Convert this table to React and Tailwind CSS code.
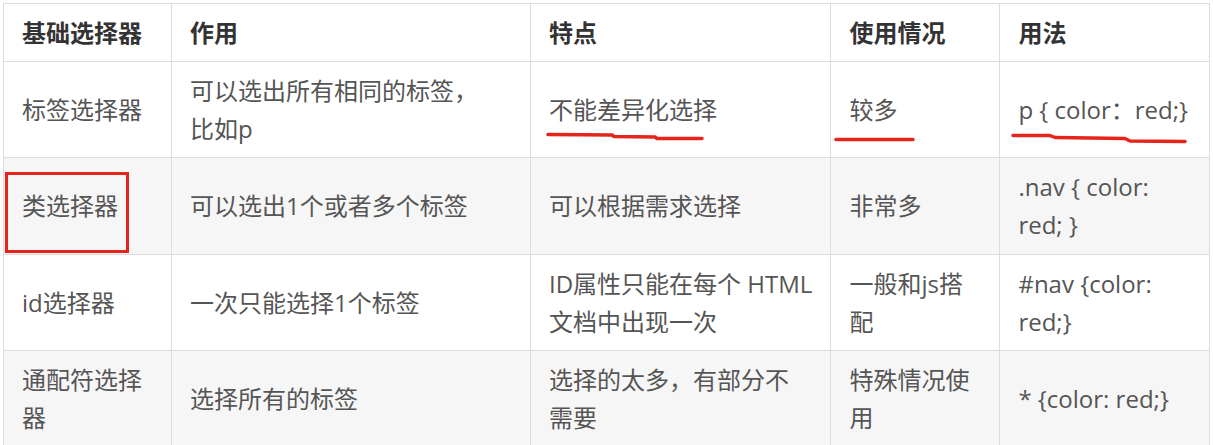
import React from "react";

const rows = [
  {
    cls: "h-[96px] bg-white",
    cells: [
      "标签选择器",
      ["可以选出所有相同的标签，", "比如p"],
      "不能差异化选择",
      "较多",
      "p { color：red;}",
    ],
  },
  {
    cls: "h-[97px] bg-[#f6f6f6]",
    cells: [
      "类选择器",
      "可以选出1个或者多个标签",
      "可以根据需求选择",
      "非常多",
      [".nav { color:", "red; }"],
    ],
  },
  {
    cls: "h-[96px] bg-white",
    cells: [
      "id选择器",
      "一次只能选择1个标签",
      ["ID属性只能在每个 HTML", "文档中出现一次"],
      ["一般和js搭", "配"],
      ["#nav {color:", "red;}"],
    ],
  },
  {
    cls: "h-[96px] bg-[#f6f6f6]",
    cells: [
      ["通配符选择", "器"],
      "选择所有的标签",
      ["选择的太多，有部分不", "需要"],
      ["特殊情况使", "用"],
      "* {color: red;}",
    ],
  },
];

const heads = ["基础选择器", "作用", "特点", "使用情况", "用法"];
const widths = ["w-[168px]", "w-[359px]", "w-[300px]", "w-[169px]", "w-[210px]"];

const Cell = ({ value }) => (
  <td className="border border-[#dcdcdc] px-[18px] align-middle whitespace-nowrap">
    {Array.isArray(value)
      ? value.map((line, i) => <div key={i}>{line}</div>)
      : value}
  </td>
);

export default function App() {
  return (
    <div className="relative w-[1213px] h-[445px] overflow-hidden bg-white pt-[3px] pl-[3px] font-['Open_Sans','Noto_Sans_CJK_SC',sans-serif]">
      <table className="table-fixed border-collapse text-[24px] leading-[38px] text-[#555]">
        <colgroup>
          {widths.map((w, i) => (
            <col key={i} className={w} />
          ))}
        </colgroup>
        <thead>
          <tr className="h-[58px] bg-white">
            {heads.map((h) => (
              <th key={h} className="border border-[#dcdcdc] px-[18px] text-left font-bold text-[#333] align-middle">
                {h}
              </th>
            ))}
          </tr>
        </thead>
        <tbody>
          {rows.map((row, idx) => (
            <tr key={idx} className={row.cls}>
              {row.cells.map((c, i) => (
                <Cell key={i} value={c} />
              ))}
            </tr>
          ))}
        </tbody>
      </table>

      {/* teacher's red pen marks */}
      <svg className="absolute left-0 top-0" width="1213" height="445" viewBox="0 0 1213 445" fill="none">
        <rect x="6.5" y="173.5" width="121" height="78" stroke="#e5251c" strokeWidth="3" />
        <path d="M548 134.5 L612 135 L614 136.5 L655 137 L657 138.5 L702 138.5" stroke="#e5251c" strokeWidth="3.5" strokeLinecap="round" strokeLinejoin="round" />
        <path d="M836 139.5 L913 139.5" stroke="#e5251c" strokeWidth="3.5" strokeLinecap="round" />
        <path d="M1013 135.5 L1050 135.5 L1055 137.5 L1125 138.5 L1130 141 L1185 141.5" stroke="#e5251c" strokeWidth="3.5" strokeLinecap="round" strokeLinejoin="round" />
      </svg>
    </div>
  );
}
